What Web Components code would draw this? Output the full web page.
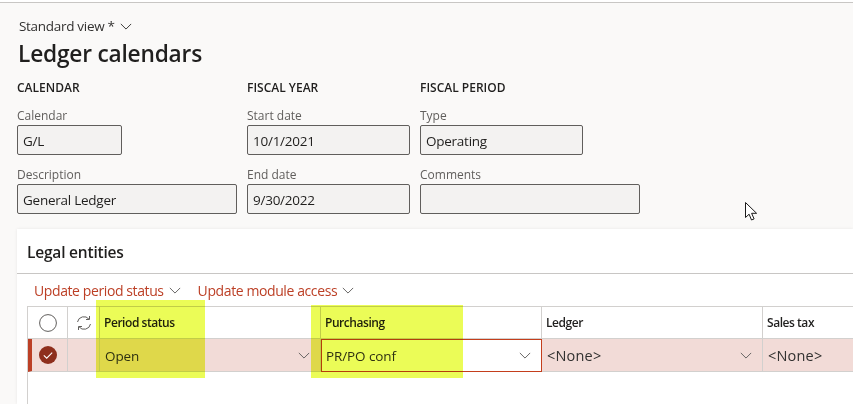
<!DOCTYPE html>
<html>
<head>
<meta charset="utf-8">
<title>Ledger calendars</title>
<style>
  html, body { margin: 0; height: 100%; overflow: hidden; background: #faf9f8; }
  body { font-family: "Open Sans", "Noto Sans", sans-serif; color: #201f1e; }
</style>
</head>
<body>
<ledger-page>
  <view-header slot="header" view="Standard view *" title="Ledger calendars"></view-header>
  <field-group slot="form" heading="CALENDAR" style="width:230px">
    <form-field label="Calendar" value="G/L" width="105"></form-field>
    <form-field label="Description" value="General Ledger" width="220"></form-field>
  </field-group>
  <field-group slot="form" heading="FISCAL YEAR" style="width:173px">
    <form-field label="Start date" value="10/1/2021" width="163"></form-field>
    <form-field label="End date" value="9/30/2022" width="163"></form-field>
  </field-group>
  <field-group slot="form" heading="FISCAL PERIOD" style="width:230px">
    <form-field label="Type" value="Operating" width="163"></form-field>
    <form-field label="Comments" value="" width="220"></form-field>
  </field-group>
  <legal-entities slot="card"></legal-entities>
</ledger-page>

<script>
const CHEVRON = (w, color) => `<svg width="${w}" height="${Math.round(w * 0.6)}" viewBox="0 0 14 8" style="display:block;flex:none"><path d="M1 1l6 6 6-6" fill="none" stroke="${color}" stroke-width="1.1"/></svg>`;

class LedgerPage extends HTMLElement {
  connectedCallback() {
    this.attachShadow({ mode: 'open' });
    this.shadowRoot.innerHTML = `
      <style>
        :host { display: flex; flex-direction: column; height: 404px; position: relative; overflow: hidden; }
        .top { height: 2px; background: #fff; border-bottom: 1px solid #c8c6c4; flex: none; }
        .form { display: flex; padding-left: 17px; flex: none; height: 159px; padding-top: 8px; box-sizing: border-box; }
        .card { flex: 1; margin-left: 17px; background: #fff; box-shadow: 0 0 3px rgba(0,0,0,.08); min-height: 0; }
        .cursor { position: absolute; left: 745px; top: 202px; }
      </style>
      <div class="top"></div>
      <slot name="header"></slot>
      <div class="form"><slot name="form"></slot></div>
      <div class="card"><slot name="card"></slot></div>
      <svg class="cursor" width="14" height="20" viewBox="0 0 14 20"><path d="M.5.5v15l3.6-3.3 2.4 5.8 2.6-1.1-2.5-5.6h5z" fill="#fff" stroke="#1a1a1a"/></svg>
    `;
  }
}

class ViewHeader extends HTMLElement {
  connectedCallback() {
    this.attachShadow({ mode: 'open' });
    this.shadowRoot.innerHTML = `
      <style>
        :host { display: block; height: 67px; padding: 14px 0 0 19px; box-sizing: border-box; }
        .view { display: flex; align-items: center; gap: 5px; font-size: 13.5px; line-height: 18px; color: #323130; letter-spacing: -.3px; }
        h1 { margin: 3px 0 0 -1px; font-size: 22.7px; line-height: 32px; font-weight: 600; letter-spacing: -.2px; color: #201f1e; }
      </style>
      <div class="view"><span>${this.getAttribute('view')}</span>${CHEVRON(12, '#323130')}</div>
      <h1>${this.getAttribute('title')}</h1>
    `;
  }
}

class FieldGroup extends HTMLElement {
  connectedCallback() {
    this.attachShadow({ mode: 'open' });
    this.shadowRoot.innerHTML = `
      <style>
        :host { display: block; flex: none; }
        h2 { margin: 0 0 7px; font-size: 12px; line-height: 20px; font-weight: 600; color: #201f1e; letter-spacing: 0; }
      </style>
      <h2>${this.getAttribute('heading')}</h2>
      <slot></slot>
    `;
  }
}

class FormField extends HTMLElement {
  connectedCallback() {
    this.attachShadow({ mode: 'open' });
    this.shadowRoot.innerHTML = `
      <style>
        :host { display: block; margin-bottom: 9px; }
        label { display: block; font-size: 12px; line-height: 21px; margin-bottom: -1px; color: #605e5c; letter-spacing: 0; }
        .box { height: 30px; box-sizing: border-box; border: 1px solid #605e5c; border-radius: 2px; background: #f3f2f1; padding: 0 5px; font-size: 13.5px; line-height: 30px; color: #201f1e; letter-spacing: -.25px; }
      </style>
      <label>${this.getAttribute('label')}</label>
      <div class="box" style="width:${this.getAttribute('width')}px">${this.getAttribute('value')}</div>
    `;
  }
}

class LegalEntities extends HTMLElement {
  connectedCallback() {
    this.attachShadow({ mode: 'open' });
    const cols = [['Period status', 'Open', 'arrow'], ['Purchasing', 'PR/PO conf', 'edit'], ['Ledger', '&lt;None&gt;', 'arrow'], ['Sales tax', '&lt;None&gt;', '']];
    this.shadowRoot.innerHTML = `
      <style>
        :host { display: block; height: 100%; position: relative; }
        .title { height: 45px; box-sizing: border-box; border-bottom: 1px solid #c8c6c4; padding-left: 10px; font-size: 15.5px; line-height: 46px; font-weight: 600; color: #201f1e; letter-spacing: -.2px; }
        .actions { display: flex; height: 32px; padding-left: 17px; gap: 17px; align-items: center; color: #bc3f25; font-size: 14px; letter-spacing: -.4px; }
        .actions span { display: flex; align-items: center; gap: 5px; }
        .grid { margin-left: 10px; height: 200px; border-left: 1px solid #d2d0ce; display: grid; grid-template-columns: 40px 32px 221px 221px 221px 100px; grid-template-rows: 32px 33px; align-content: start; border-top: 1px solid #d2d0ce; }
        .cell { box-sizing: border-box; border-right: 1px solid #d2d0ce; border-bottom: 1px solid #d2d0ce; display: flex; align-items: center; font-size: 12px; font-weight: 600; padding-left: 4px; letter-spacing: -.45px; color: #201f1e; }
        .row { background: #f2dbd7; font-size: 13.5px; font-weight: 400; color: #323130; justify-content: space-between; padding: 0 5px; letter-spacing: -.1px; }
        .row span { padding-top: 1px; }
        .icon { padding: 0; justify-content: center; }
        .mark { border-left: 4px solid #bc3f25; }
        .mark svg { margin-left: -3px; }
        .edit { background: #fff; border: 1px solid #c43e1c; padding-left: 4px; }
        .pad { padding-right: 10px; }
        .none { font-size: 14.5px; letter-spacing: .2px; }
        .hl { position: absolute; background: #ebfc57; mix-blend-mode: multiply; }
      </style>
      <div class="title">Legal entities</div>
      <div class="actions">
        <span>Update period status ${CHEVRON(12, '#605e5c')}</span>
        <span>Update module access ${CHEVRON(12, '#605e5c')}</span>
      </div>
      <div class="grid">
        <div class="cell icon"><svg width="18" height="18" viewBox="0 0 18 18"><circle cx="9" cy="9" r="8.4" fill="none" stroke="#605e5c"/></svg></div>
        <div class="cell icon"><svg width="16" height="16" viewBox="0 0 16 16" fill="none" stroke="#605e5c"><path d="M1.5 7A6.5 6.5 0 0 1 13 4.2M14.5 9A6.5 6.5 0 0 1 3 11.8"/><path d="M13.5 1v3.5H10M2.5 15v-3.5H6"/></svg></div>
        ${cols.map(c => `<div class="cell">${c[0]}</div>`).join('')}
        <div class="cell icon row mark"><svg width="18" height="18" viewBox="0 0 18 18"><circle cx="9" cy="9" r="9" fill="#8e2f1d"/><path d="M4.8 9.4l2.9 2.8 5.5-5.6" fill="none" stroke="#fff" stroke-width="1.1"/></svg></div>
        <div class="cell row"></div>
        ${cols.map(c => `<div class="cell row pad ${c[2] === 'edit' ? 'edit' : ''}"><span class="${c[1].startsWith('&lt;') ? 'none' : ''}">${c[1]}</span>${c[2] ? CHEVRON(12, '#605e5c') : ''}</div>`).join('')}
      </div>
      <div class="hl" style="left:79px;top:71px;width:109px;height:78px"></div>
      <div class="hl" style="left:294px;top:76px;width:152px;height:73px"></div>
    `;
  }
}

customElements.define('ledger-page', LedgerPage);
customElements.define('view-header', ViewHeader);
customElements.define('field-group', FieldGroup);
customElements.define('form-field', FormField);
customElements.define('legal-entities', LegalEntities);
</script>
</body>
</html>
